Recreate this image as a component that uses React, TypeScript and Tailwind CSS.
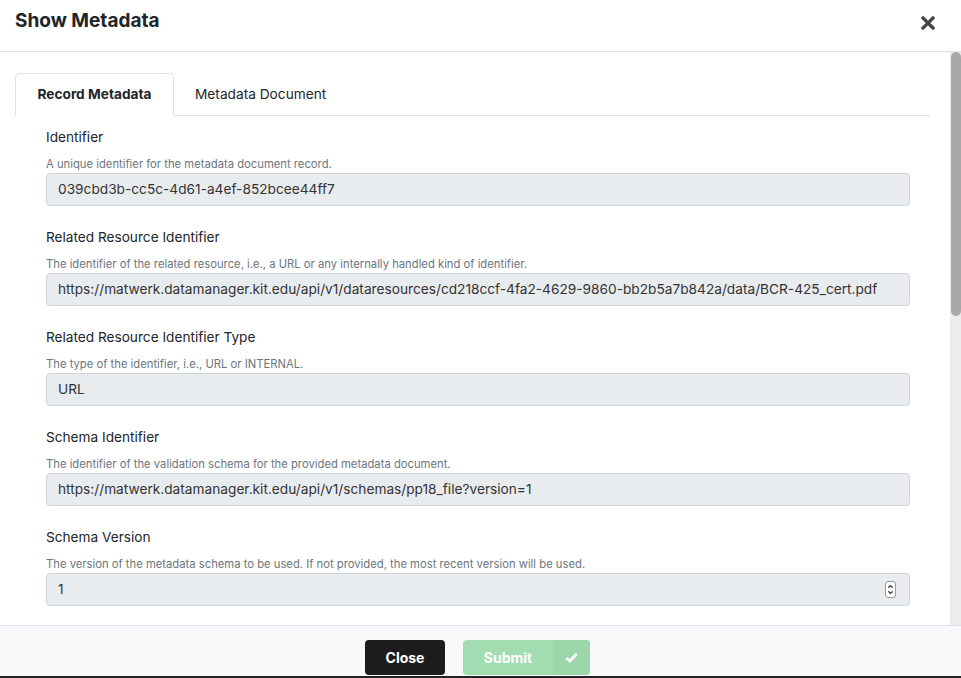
import React from 'react';

interface FieldProps {
    label: string;
    help: string;
    value: string;
    spinner?: boolean;
}

const Field: React.FC<FieldProps> = ({ label, help, value, spinner }) => (
    <div className="flex flex-col pb-[21px]">
        <label className="h-5 text-[13.65px] leading-5 text-[#212529]">{label}</label>
        <p className="mt-[9px] h-4 text-[11.25px] leading-4 text-[#6c757d]">{help}</p>
        <div className="mt-px flex h-[33px] items-center rounded-[4px] border border-[#ced4da] bg-[#e9ecef] px-[11px] text-[13.7px] text-[#333]">
            <span className="flex-1 truncate">{value}</span>
            {spinner && (
                <span className="mr-[2px] flex h-[17px] w-[11px] items-center justify-center rounded-[3px] border border-[#9a9a9a] bg-white">
                    <svg viewBox="0 0 8 14" className="h-[13px] w-[7px]" fill="none" stroke="#333" strokeWidth="1.3">
                        <path d="M1.5 5 L4 2.5 L6.5 5" />
                        <path d="M1.5 9 L4 11.5 L6.5 9" />
                    </svg>
                </span>
            )}
        </div>
    </div>
);

const fields: FieldProps[] = [
    { label: 'Identifier', help: 'A unique identifier for the metadata document record.', value: '039cbd3b-cc5c-4d61-a4ef-852bcee44ff7' },
    {
        label: 'Related Resource Identifier',
        help: 'The identifier of the related resource, i.e., a URL or any internally handled kind of identifier.',
        value: 'https://matwerk.datamanager.kit.edu/api/v1/dataresources/cd218ccf-4fa2-4629-9860-bb2b5a7b842a/data/BCR-425_cert.pdf',
    },
    { label: 'Related Resource Identifier Type', help: 'The type of the identifier, i.e., URL or INTERNAL.', value: 'URL' },
    {
        label: 'Schema Identifier',
        help: 'The identifier of the validation schema for the provided metadata document.',
        value: 'https://matwerk.datamanager.kit.edu/api/v1/schemas/pp18_file?version=1',
    },
    {
        label: 'Schema Version',
        help: 'The version of the metadata schema to be used. If not provided, the most recent version will be used.',
        value: '1',
        spinner: true,
    },
];

export default function App() {
    return (
        <div className="flex h-[678px] w-[961px] flex-col overflow-hidden bg-white font-['Inter','Noto_Sans',sans-serif]">
            {/* Header */}
            <div className="flex h-[52px] shrink-0 items-start justify-between border-b border-[#dee2e6] pl-[15px] pr-[26px]">
                <h1 className="mt-[8px] text-[19px] font-bold leading-[26px] text-[#212529]">Show Metadata</h1>
                <button aria-label="Close" className="mt-[16px]">
                    <svg viewBox="0 0 14 14" className="h-[14px] w-[14px]">
                        <path d="M2 2 L12 12 M12 2 L2 12" stroke="#444" strokeWidth="3.2" strokeLinecap="square" />
                    </svg>
                </button>
            </div>

            {/* Body */}
            <div className="flex min-h-0 flex-1">
                <div className="flex-1 overflow-hidden pl-[15px] pr-[20px] pt-[21px]">
                    <div className="flex h-[43px] border-b border-[#dee2e6]">
                        <button className="-mb-px h-[43px] w-[159px] rounded-t-[5px] border border-b-white border-[#dee2e6] bg-white text-[13.7px] font-bold text-[#212529]">
                            Record Metadata
                        </button>
                        <button className="h-[42px] px-[21px] text-[13.7px] text-[#212529]">Metadata Document</button>
                    </div>
                    <div className="pl-[31px] pr-[20px] pt-[11px]">
                        {fields.map(f => (
                            <Field key={f.label} {...f} />
                        ))}
                    </div>
                </div>
                {/* Scrollbar */}
                <div className="flex w-[11px] shrink-0 flex-col bg-[#ececec] pl-px">
                    <div className="h-[264px] rounded-b-[5px] rounded-t-[5px] bg-[#a8a8a8]" />
                </div>
            </div>

            {/* Footer */}
            <div className="flex h-[51px] shrink-0 items-start justify-center gap-[18px] border-t border-[#dee2e6] bg-[#f8f9fa] pr-[6px] pt-[14px]">
                <button className="h-[35px] w-[80px] rounded-[4px] bg-[#1c1c1e] text-[14px] font-bold text-white">Close</button>
                <button className="flex h-[35px] w-[127px] overflow-hidden rounded-[4px] bg-[#a2dcb1] text-[14px] font-bold text-white">
                    <span className="flex h-full w-[90px] items-center justify-center">Submit</span>
                    <span className="flex h-full flex-1 items-center justify-center bg-[#9cd7ab]">
                        <svg viewBox="0 0 16 16" className="h-[15px] w-[15px]" fill="none" stroke="white" strokeWidth="2.8">
                            <path d="M2.5 8.5 L6.3 12 L13.5 4" />
                        </svg>
                    </span>
                </button>
            </div>
            <div className="h-[2px] shrink-0 bg-[#222]" />
        </div>
    );
}
